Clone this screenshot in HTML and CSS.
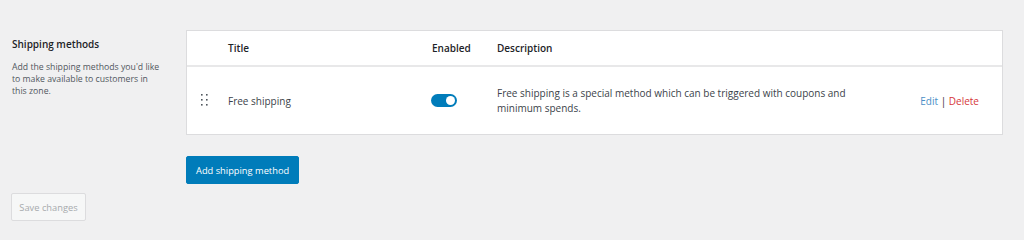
FILE: index.html
```html
<!DOCTYPE html>
<html>
<head>
<meta charset="utf-8">
<link rel="stylesheet" href="styles.css">
</head>
<body>
<div class="page">
  <div class="section">
    <div class="intro">
      <h2 class="intro-title">Shipping methods</h2>
      <p class="intro-text">Add the shipping methods you'd like to make available to customers in this zone.</p>
    </div>
    <div class="main">
      <div class="table">
        <div class="row head">
          <div class="cell"></div>
          <div class="cell">Title</div>
          <div class="cell">Enabled</div>
          <div class="cell">Description</div>
          <div class="cell"></div>
        </div>
        <div class="row body">
          <div class="cell handle-cell">
            <svg class="handle" width="8" height="13" viewBox="0 0 8 13">
              <rect x="0" y="0" width="1.6" height="1.6" fill="#50575e"/>
              <rect x="5" y="0" width="1.6" height="1.6" fill="#50575e"/>
              <rect x="0" y="5" width="1.6" height="1.6" fill="#50575e"/>
              <rect x="5" y="5" width="1.6" height="1.6" fill="#50575e"/>
              <rect x="0" y="10" width="1.6" height="1.6" fill="#50575e"/>
              <rect x="5" y="10" width="1.6" height="1.6" fill="#50575e"/>
            </svg>
          </div>
          <div class="cell">Free shipping</div>
          <div class="cell"><span class="toggle"><span class="knob"></span></span></div>
          <div class="cell desc">Free shipping is a special method which can be triggered with coupons and minimum spends.</div>
          <div class="cell actions"><a class="edit">Edit</a> <span class="sep">|</span> <a class="delete">Delete</a></div>
        </div>
      </div>
      <button class="btn-primary">Add shipping method</button>
    </div>
  </div>
  <button class="btn-disabled">Save changes</button>
</div>
</body>
</html>
```
FILE: styles.css
```css
html, body {
  margin: 0;
  padding: 0;
  background: #f0f0f1;
}
body {
  font-family: "Open Sans", "Noto Sans", sans-serif;
  font-size: 10px;
  color: #3c434a;
}
.page {
  padding: 30px 0 0 11px;
}
.section {
  display: flex;
}
.intro {
  width: 148px;
  padding-left: 1px;
  margin-right: 26px;
  padding-top: 7px;
}
.intro-title {
  margin: 0;
  font-size: 10px;
  font-weight: 600;
  color: #1d2327;
  line-height: 14px;
}
.intro-text {
  margin: 10px 0 0;
  font-size: 8.7px;
  line-height: 12px;
  color: #50575e;
}
.main {
  flex: 1;
  margin-right: 21px;
}
.table {
  background: #fff;
  border: 1px solid #dcdcde;
}
.row {
  display: grid;
  grid-template-columns: 41px 204px 65px 1fr auto;
  align-items: center;
}
.head {
  height: 34px;
  border-bottom: 2px solid #e8e8e9;
  font-weight: 600;
  color: #1d2327;
}
.body {
  height: 67px;
}
.handle-cell {
  padding-left: 14px;
  display: flex;
  align-items: center;
}
.handle {
  display: block;
}
.toggle {
  display: block;
  width: 26px;
  height: 13px;
  border-radius: 7px;
  background: #007cba;
  position: relative;
  margin-left: -1px;
}
.knob {
  position: absolute;
  right: 2px;
  top: 2px;
  width: 9px;
  height: 9px;
  border-radius: 50%;
  background: #fff;
}
.desc {
  max-width: 365px;
  line-height: 15px;
}
.actions {
  padding-right: 23px;
  padding-left: 20px;
}
.edit {
  color: #4a8fc7;
}
.sep {
  color: #1d2327;
}
.delete {
  color: #d63638;
}
.btn-primary {
  margin-top: 21px;
  height: 28px;
  padding: 0 9px;
  background: #007cba;
  border: 1px solid #007cba;
  border-radius: 2px;
  color: #fff;
  font-family: "Open Sans", "Noto Sans", sans-serif;
  font-size: 9.3px;
  display: block;
}
.btn-disabled {
  margin-top: 9px;
  height: 28px;
  width: 75px;
  padding: 0;
  background: #f6f7f7;
  border: 1px solid #dcdcde;
  border-radius: 2px;
  color: #a7aaad;
  font-family: "Open Sans", "Noto Sans", sans-serif;
  font-size: 9.3px;
  display: block;
}
```
